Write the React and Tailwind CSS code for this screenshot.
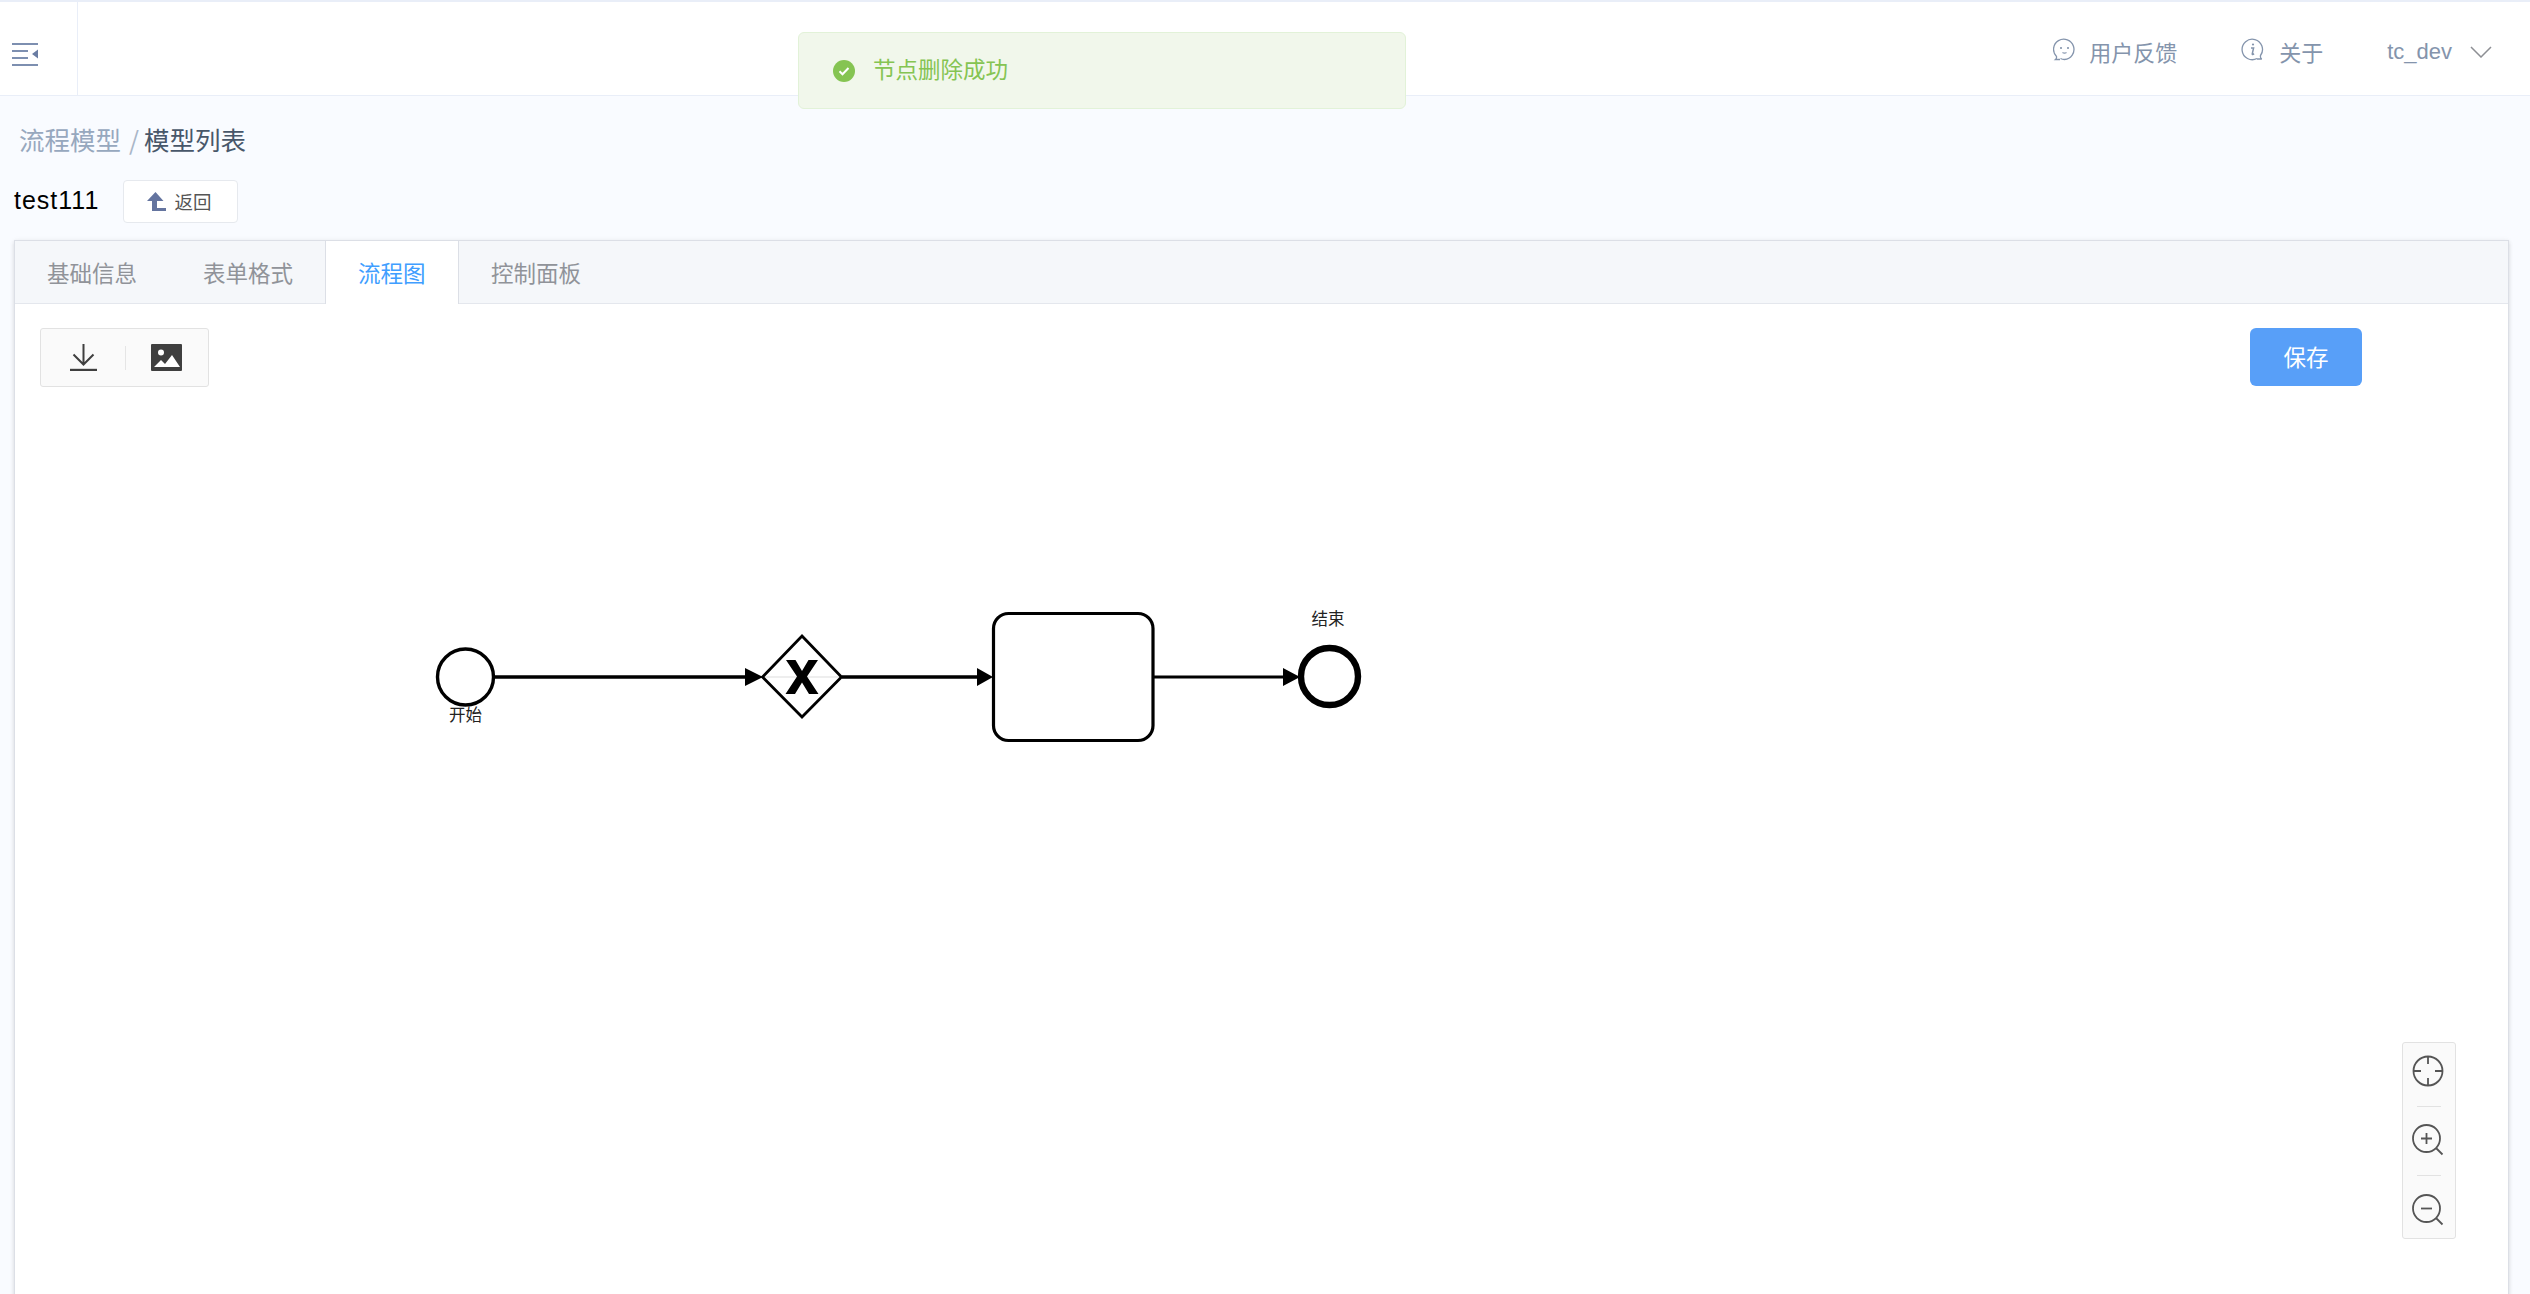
import React from "react";

const CJK = "font-['Noto_Sans_CJK_SC','Liberation_Sans',sans-serif]";

function MenuIcon() {
  return (
    <svg width="26" height="23" viewBox="0 0 26 23" fill="none">
      <path d="M0 1h26M0 8h16M0 15h16M0 22h26" stroke="#7d8fb0" strokeWidth="2" />
      <path d="M26 6.500v9l-6-4.500z" fill="#6a7da3" />
    </svg>
  );
}

function FeedbackIcon() {
  return (
    <svg width="23" height="23" viewBox="0 0 23 23" fill="none" stroke="#8494ac" strokeWidth="1.300">
      <path d="M7 21.500H2.500c1-.8 1.200-1.800 1-3A10.200 10.200 0 1 1 11.500 21.500c-1.500 0-2.800-.3-4-1" />
      <path d="M8 9v2M15 9v2" strokeWidth="1.600" />
      <path d="M9.500 14.500c1.300.8 2.700.8 4 0" />
    </svg>
  );
}

function InfoIcon() {
  return (
    <svg width="23" height="23" viewBox="0 0 23 23" fill="none" stroke="#8494ac" strokeWidth="1.300">
      <path d="M16 20.500a10.200 10.200 0 1 1 3.500-3c-.3 1.500 0 2.800 1.300 3.500H16" />
      <circle cx="12" cy="6.500" r="1.100" fill="#8494ac" stroke="none" />
      <path d="M10 10h2.600l-1.400 6c0 .6.800.6 1.800-.4" strokeWidth="1.500" />
    </svg>
  );
}

function Chevron() {
  return (
    <svg width="22" height="12" viewBox="0 0 22 12" fill="none" stroke="#8d8f94" strokeWidth="1.500">
      <path d="M1 1l10 10L21 1" />
    </svg>
  );
}

function BackIcon() {
  return (
    <svg width="19" height="19" viewBox="0 0 19 19" fill="#64749f">
      <path d="M8.500 0L0 9h5v10h14v-3h-9V9h6.500z" />
    </svg>
  );
}

function DownloadIcon() {
  return (
    <svg width="27" height="27" viewBox="0 0 27 27" fill="none" stroke="#3f3f3f">
      <path d="M13.500 0v20M3.500 10.500l10 10 10-10" strokeWidth="2" />
      <path d="M0 26h27" strokeWidth="2.400" />
    </svg>
  );
}

function ImageIcon() {
  return (
    <svg width="31" height="27" viewBox="0 0 31 27">
      <rect width="31" height="27" rx="1" fill="#3f3f3f" />
      <circle cx="10" cy="8.500" r="3" fill="#fff" />
      <path d="M3 23l7-7 4 4 7-9 8 12z" fill="#fff" />
    </svg>
  );
}

function CenterIcon() {
  return (
    <svg width="32" height="32" viewBox="0 0 32 32" fill="none" stroke="#555" strokeWidth="1.800">
      <circle cx="16" cy="16" r="14.500" />
      <path d="M16 1v8M16 23v8M1 16h8M23 16h8" />
    </svg>
  );
}

function ZoomIcon({ plus }) {
  return (
    <svg width="32" height="32" viewBox="0 0 32 32" fill="none" stroke="#555" strokeWidth="1.800">
      <circle cx="14.500" cy="14.500" r="13.500" />
      <path d="M24 24l6.500 6.500" />
      <path d={plus ? "M9 14.500h11M14.500 9v11" : "M9 14.500h11"} />
    </svg>
  );
}

function SuccessIcon() {
  return (
    <svg width="22" height="22" viewBox="0 0 22 22">
      <circle cx="11" cy="11" r="11" fill="#85c452" />
      <path d="M6.500 11.300l3 3 6-6.300" fill="none" stroke="#fff" strokeWidth="2" />
    </svg>
  );
}

function Diagram() {
  return (
    <svg width="960" height="140" viewBox="420 600 960 140" className="block overflow-visible">
      <g fill="none" stroke="#000">
        <path d="M495 677H746M842 677H978" strokeWidth="3.400" />
        <path d="M1154 677H1284" strokeWidth="3" />
        <path d="M762 677H842" stroke="#eeeeee" strokeWidth="2" />
        <circle cx="465.500" cy="677" r="28" strokeWidth="3.400" />
        <path d="M802 636L841.500 677L802 717L762.500 677Z" strokeWidth="2.800" />
        <rect x="993.500" y="613.500" width="159.500" height="127" rx="15" fill="#fff" strokeWidth="3.200" />
        <circle cx="1329.500" cy="676.500" r="28.500" fill="#fff" strokeWidth="6.400" />
      </g>
      <path d="M745 668L763 677L745 686Z M977 668L993 677L977 686Z M1283 668L1300 677L1283 686Z" fill="#000" />
      <path d="M786 660h9.500l6.500 11 6.500-11h9.500l-11 16.500 11.500 17.500h-9.500l-7-11.500-7 11.500h-9.500l11.500-17.500z" fill="#000" />
      <text x="465.500" y="721" textAnchor="middle" fontSize="16.500" fontFamily="'Noto Sans CJK SC',sans-serif" fill="#222">开始</text>
      <text x="1328" y="625" textAnchor="middle" fontSize="16.500" fontFamily="'Noto Sans CJK SC',sans-serif" fill="#222">结束</text>
    </svg>
  );
}

export default function App() {
  return (
    <div className={`relative h-[1294px] w-[2530px] overflow-hidden bg-[#f9fbff] ${CJK}`}>
      <header className="flex h-[96px] items-center justify-between border-t-2 border-b border-[#e9eef8] bg-white">
        <div className="flex h-full w-[78px] items-center border-r border-[#e9eef8] pl-3 pt-[12px]">
          <MenuIcon />
        </div>
        <div className="flex items-center text-[22px] leading-[30px] text-[#8494ac]">
          <div className="flex items-center gap-[13px]">
            <div className="mt-[2px]"><FeedbackIcon /></div>
            <span className="mt-[4px]">用户反馈</span>
          </div>
          <div className="ml-[64px] flex items-center gap-[15px]">
            <div className="mt-[2px]"><InfoIcon /></div>
            <span className="mt-[4px]">关于</span>
          </div>
          <div className="ml-[64px] mr-[38px] mt-[6px] flex items-center gap-[18px]">
            <span className="font-['Liberation_Sans',sans-serif]">tc_dev</span>
            <Chevron />
          </div>
        </div>
      </header>

      <nav className="flex h-[84px] items-center pl-[19px] pt-[2px] text-[25.5px] leading-[34px]">
        <span className="text-[#97a8be]">流程模型</span>
        <span className="ml-[8px] mr-[5px] text-[#a9b6c8]">/</span>
        <span className="text-[#48576a]">模型列表</span>
      </nav>

      <div className="flex h-[43px] items-center pl-[14px]">
        <span className="-mt-[3px] w-[109px] font-['Liberation_Sans',sans-serif] text-[25px] leading-[30px] tracking-[1px] text-black">test111</span>
        <button className="flex h-[43px] w-[115px] items-center justify-center gap-[8px] rounded-[4px] border border-[#e6e9ee] bg-white pr-[2px] text-[18.5px] text-[#555]">
          <BackIcon />
          <span>返回</span>
        </button>
      </div>

      <section className="mx-[14px] mt-[17px] h-[1100px] w-[2495px] border border-[#dcdfe6] bg-white shadow-[0_2px_4px_0_rgba(0,0,0,0.12),0_0_6px_0_rgba(0,0,0,0.04)]">
        <div className="flex h-[63px] border-b border-[#e4e7ed] bg-[#f5f7fa] text-[22.5px] leading-[62px] text-[#909399]">
          <div className="w-[96px] pl-[32px] whitespace-nowrap">基础信息</div>
          <div className="ml-[92px] w-[122px] whitespace-nowrap">表单格式</div>
          <div className="-mb-px h-[63px] w-[134px] border-x border-[#dcdfe6] bg-white pl-[32px] text-[#409eff]">流程图</div>
          <div className="ml-[32px] whitespace-nowrap">控制面板</div>
        </div>

        <div className="relative h-[1036px]">
          <div className="flex items-start justify-between pl-[25px] pr-[146px] pt-[24px]">
            <div className="flex h-[59px] w-[169px] items-center rounded-[3px] border border-[#e2e2e2] bg-[#fafafa] pl-[29px]">
              <DownloadIcon />
              <div className="ml-[28px] h-[24px] w-px bg-[#e5e5e5]" />
              <div className="ml-[25px]"><ImageIcon /></div>
            </div>
            <button className="h-[58px] w-[112px] rounded-[6px] bg-[#589ff8] text-[22.5px] text-white">保存</button>
          </div>

          <div className="absolute left-[405px] top-[296px]">
            <Diagram />
          </div>

          <div className="absolute left-[2387px] top-[738px] flex h-[197px] w-[54px] flex-col items-center rounded-[3px] border border-[#e2e2e2] bg-[#fafafa] pt-[12px]">
            <div className="-ml-[2px]"><CenterIcon /></div>
            <div className="mt-[19px] h-px w-[24px] bg-[#e2e2e2]" />
            <div className="mt-[17px] -ml-[2px]"><ZoomIcon plus /></div>
            <div className="mt-[19px] h-px w-[24px] bg-[#e2e2e2]" />
            <div className="mt-[18px] -ml-[2px]"><ZoomIcon /></div>
          </div>
        </div>
      </section>

      <div className="absolute left-[798px] top-[32px] flex h-[77px] w-[608px] items-center rounded-[6px] border border-[#e2f2d8] bg-[#f1f7eb] pl-[34px]">
        <SuccessIcon />
        <span className="ml-[18px] -mt-[3px] text-[22.5px] text-[#85c452]">节点删除成功</span>
      </div>
    </div>
  );
}
